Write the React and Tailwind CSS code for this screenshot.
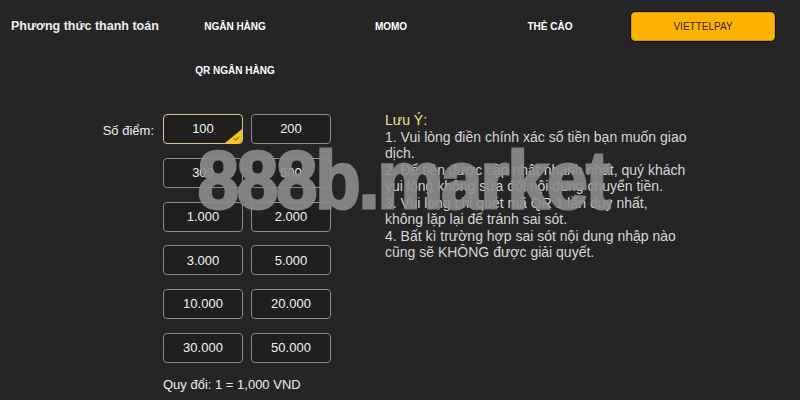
import React, { useState } from "react";

const tabs = ["NGÂN HÀNG", "MOMO", "THẺ CÀO", "VIETTELPAY", "QR NGÂN HÀNG"];
const amounts = ["100", "200", "300", "500", "1.000", "2.000", "3.000", "5.000", "10.000", "20.000", "30.000", "50.000"];

const notes = [
  ["1. Vui lòng điền chính xác số tiền bạn muốn giao", "dịch."],
  ["2. Để tiền được cập nhật nhanh nhất, quý khách", "vui lòng không sửa đổi nội dung chuyển tiền."],
  ["3. Vui lòng chỉ quét mã QR 1 lần duy nhất,", "không lặp lại để tránh sai sót."],
  ["4. Bất kì trường hợp sai sót nội dung nhập nào", "cũng sẽ KHÔNG được giải quyết."],
];

export default function App() {
  const [tab, setTab] = useState("VIETTELPAY");
  const [amount, setAmount] = useState("100");

  return (
    <div className="relative w-[800px] h-[400px] overflow-hidden bg-[#252525] text-white font-['Liberation_Sans',Arial,sans-serif]">
      {/* payment methods */}
      <div className="flex pt-3 pl-[11px]">
        <div className="w-[146px] h-[29px] flex items-center whitespace-nowrap text-[12.5px] font-semibold text-[#eee]">
          Phương thức thanh toán
        </div>
        <div className="grid grid-cols-[156px_156px_162px_144px] gap-y-[15px]">
          {tabs.map((t) => {
            const active = tab === t;
            return (
              <button
                key={t}
                onClick={() => setTab(t)}
                className={`h-[29px] flex items-center justify-center text-[10px] uppercase ${
                  active
                    ? "bg-[#ffb300] text-[#3a2a00] rounded-[4px] border border-[#d99a00] shadow-[0_0_0_1px_#111]"
                    : "font-bold text-white"
                }`}
              >
                {t}
              </button>
            );
          })}
        </div>
      </div>

      {/* content */}
      <div className="flex mt-[29px]">
        <div className="flex">
          <div className="w-[155px] pr-[1px] pt-[7px] text-right text-[13px] text-[#eee]">Số điểm:</div>
          <div className="ml-[8px]">
            <div className="grid grid-cols-[80px_80px] gap-x-[8px] gap-y-[13.8px]">
              {amounts.map((a) => {
                const active = amount === a;
                return (
                  <button
                    key={a}
                    onClick={() => setAmount(a)}
                    className={`relative h-[30px] rounded-[4px] bg-[#1f1f1f] text-[13px] text-[#f2f2f2] overflow-hidden border ${
                      active ? "border-[#d8c48a]" : "border-[#8a8a8a]"
                    }`}
                  >
                    {a}
                    {active && (
                      <span className="absolute right-0 bottom-0 w-[17px] h-[14px] bg-[#f7c315] [clip-path:polygon(100%_0,100%_100%,0_100%)]">
                        <svg viewBox="0 0 10 10" className="absolute right-[2px] bottom-[1px] w-[7px] h-[7px]">
                          <path d="M1.5 5 L4 7.5 L8.5 2.5" stroke="#5a4300" strokeWidth="1.4" fill="none" />
                        </svg>
                      </span>
                    )}
                  </button>
                );
              })}
            </div>
            <div className="mt-[12px] text-[13px] text-[#eee]">Quy đổi: 1 = 1,000 VND</div>
          </div>
        </div>

        <div className="ml-[54px] -mt-[2px] whitespace-nowrap text-[14px] leading-[16.5px] text-[#d6d6d6]">
          <div className="text-[#efe48a]">Lưu Ý:</div>
          {notes.map((lines) => (
            <p key={lines[0]}>
              {lines[0]}
              <br />
              {lines[1]}
            </p>
          ))}
        </div>
      </div>

      {/* watermark */}
      <div className="absolute left-0 right-0 top-[139px] pointer-events-none flex justify-center pl-[6px]">
        <span className="block scale-x-[0.9] opacity-90 text-[82px] leading-none font-bold tracking-[-2px] text-[#8d8d8d] [-webkit-text-stroke:3px_#8d8d8d] whitespace-nowrap">
          888b.market
        </span>
      </div>
    </div>
  );
}
